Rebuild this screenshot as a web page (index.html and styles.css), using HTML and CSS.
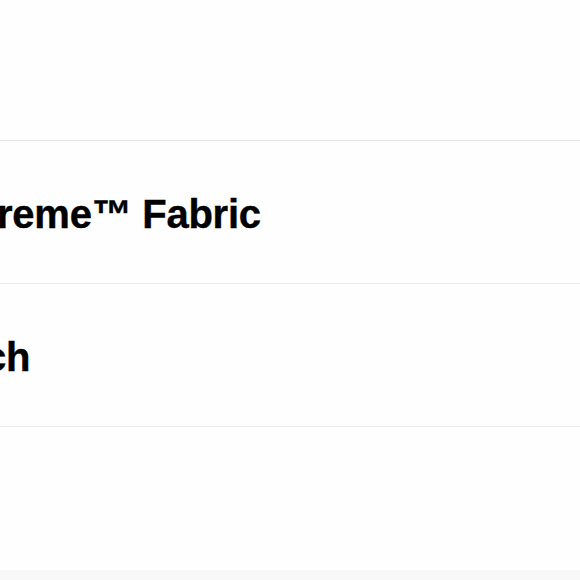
FILE: index.html
```html
<!DOCTYPE html>
<html lang="en">
<head>
<meta charset="utf-8">
<title>Features</title>
<link rel="stylesheet" href="styles.css">
</head>
<body>
<div class="page">
  <div class="top"></div>
  <ul class="features">
    <li class="feature"><span class="feature-name name-1">reme™ Fabric</span></li>
    <li class="feature"><span class="feature-name name-2">tch</span></li>
  </ul>
  <div class="spacer"></div>
  <div class="strip"></div>
</div>
</body>
</html>
```

FILE: styles.css
```css
html, body {
  margin: 0;
  padding: 0;
  background: #fefefe;
}
.page {
  width: 580px;
  height: 580px;
  overflow: hidden;
  display: flex;
  flex-direction: column;
  font-family: "Liberation Sans", Arial, sans-serif;
  color: #000;
}
.top {
  height: 140px;
  border-bottom: 1px solid #e4e4e4;
  flex: none;
}
.features {
  list-style: none;
  margin: 0;
  padding: 0;
}
.feature {
  height: 142px;
  border-bottom: 1px solid #ececec;
  display: flex;
  align-items: center;
  overflow: hidden;
}
.feature-name {
  font-size: 40px;
  font-weight: 700;
  white-space: nowrap;
  line-height: 1;
  letter-spacing: -0.25px;
  padding-top: 3px;
  -webkit-text-stroke: 0.4px #000;
}
.name-1 {
  margin-left: -3px;
}
.name-2 {
  margin-left: -29px;
}
.spacer {
  height: 143px;
  flex: none;
}
.strip {
  height: 10px;
  background: #f8f8f8;
  flex: none;
}
```
